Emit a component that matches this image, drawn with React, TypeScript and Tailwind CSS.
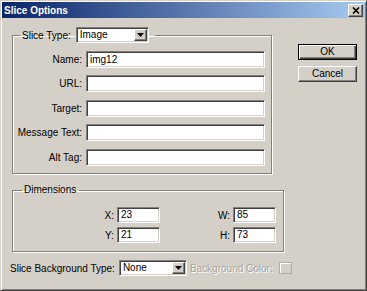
import React from "react";

const sunken =
  "border border-t-[#808080] border-l-[#808080] border-b-white border-r-white shadow-[inset_1px_1px_0_#404040,inset_-1px_-1px_0_#d4d0c8] bg-white";
const raised =
  "border border-t-white border-l-white border-b-[#404040] border-r-[#404040] shadow-[inset_-1px_-1px_0_#808080]";
const etched = "border border-[#808080] shadow-[1px_1px_0_#fff,inset_1px_1px_0_#fff]";

const Arrow = () => (
  <svg width="7" height="4" viewBox="0 0 7 4">
    <path d="M0 0h7L3.5 4z" fill="#000" />
  </svg>
);

const Select = ({ value, width }: { value: string; width: string }) => (
  <div className={`${sunken} ${width} h-[16px] flex items-stretch pl-[3px] p-px`}>
    <span className="flex-1 leading-[12px]">{value}</span>
    <div className={`${raised} bg-[#d4d0c8] w-[13px] flex items-center justify-center`}>
      <Arrow />
    </div>
  </div>
);

const Field = ({ label, value, mt }: { label: string; value?: string; mt: string }) => (
  <div className={`flex items-center ${mt}`}>
    <span className="w-[73px] pr-[4px] text-right">{label}</span>
    <div className={`${sunken} w-[179px] h-[17px] pl-[3px] leading-[15px]`}>{value}</div>
  </div>
);

const Dim = ({ a, av, b, bv, mt }: { a: string; av: string; b: string; bv: string; mt: string }) => (
  <div className={`flex items-center ${mt}`}>
    <span className="w-[104px] pr-[3px] text-right">{a}</span>
    <div className={`${sunken} w-[43px] h-[16px] pl-[3px] leading-[14px]`}>{av}</div>
    <span className="w-[73px] pr-[3px] text-right">{b}</span>
    <div className={`${sunken} w-[43px] h-[16px] pl-[3px] leading-[14px]`}>{bv}</div>
  </div>
);

export default function App() {
  return (
    <div className="w-[367px] h-[291px] bg-[#d4d0c8] border border-t-[#d4d0c8] border-l-[#d4d0c8] border-r-[#404040] border-b-[#404040] shadow-[inset_1px_1px_0_#fff,inset_-1px_-1px_0_#808080] p-px font-['Liberation_Sans',Arial,sans-serif] text-[10px] text-black">
      <div className="h-[16px] flex items-center justify-between pl-[2px] pr-[2px] bg-[linear-gradient(to_right,#0a246a,#a6caf0)]">
        <span className="text-white font-bold text-[10px]">Slice Options</span>
        <div className={`${raised} bg-[#d4d0c8] w-[15px] h-[13px] flex items-center justify-center`}>
          <svg width="8" height="7" viewBox="0 0 8 7">
            <path d="M1 0.5l6 6M7 0.5l-6 6" stroke="#000" strokeWidth="1.6" />
          </svg>
        </div>
      </div>

      <div className="flex pl-[10px] pt-[9px]">
        <div className="flex flex-col w-[272px]">
          <fieldset className={`${etched} w-[260px] pt-[8px] pb-[7px] pr-[5px]`}>
            <legend className="ml-[7px] pl-[2px] pr-[6px] flex items-center">
              <span>Slice Type:</span>
              <div className="ml-[5px]">
                <Select value="Image" width="w-[73px]" />
              </div>
            </legend>
            <Field label="Name:" value="img12" mt="mt-0" />
            <Field label="URL:" mt="mt-[7px]" />
            <Field label="Target:" mt="mt-[8px]" />
            <Field label="Message Text:" mt="mt-[7px]" />
            <Field label="Alt Tag:" mt="mt-[8px]" />
          </fieldset>

          <fieldset className={`${etched} w-[272px] mt-[10px] pt-[11px] pb-[8px]`}>
            <legend className="ml-[9px] pl-[2px] pr-[3px] leading-[12px]">Dimensions</legend>
            <Dim a="X:" av="23" b="W:" bv="85" mt="mt-0" />
            <Dim a="Y:" av="21" b="H:" bv="73" mt="mt-[4px]" />
          </fieldset>
        </div>

        <div className="flex flex-col ml-[14px] mt-[17px]">
          <button className="w-[59px] h-[16px] bg-[#d4d0c8] border border-black shadow-[inset_1px_1px_0_#fff,inset_-1px_-1px_0_#404040,inset_-2px_-2px_0_#808080] text-[10px] leading-[14px]">
            OK
          </button>
          <button className={`${raised} bg-[#d4d0c8] w-[59px] h-[16px] mt-[6px] text-[10px] leading-[14px]`}>
            Cancel
          </button>
        </div>
      </div>

      <div className="flex items-center pl-[8px] mt-[8px]">
        <span>Slice Background Type:</span>
        <div className="ml-[4px]">
          <Select value="None" width="w-[68px]" />
        </div>
        <span className="ml-[3px] text-[#a8a49c] [text-shadow:1px_1px_0_#fff]">Background Color:</span>
        <div className="ml-[6px] w-[13px] h-[12px] border border-[#b0aca4] shadow-[inset_1px_1px_0_#fff]" />
      </div>
    </div>
  );
}
